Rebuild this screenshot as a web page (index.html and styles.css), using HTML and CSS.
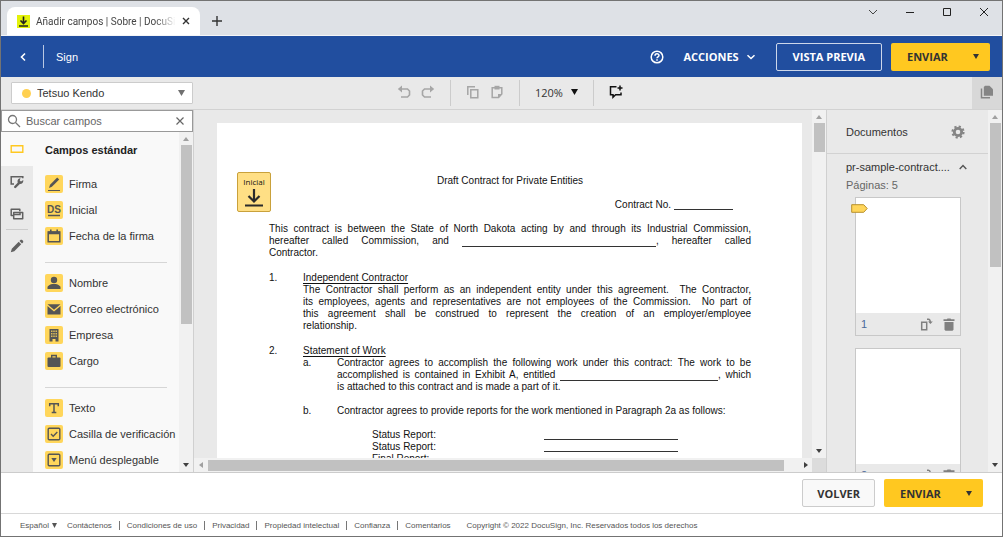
FILE: index.html
```html
<!DOCTYPE html>
<html lang="es">
<head>
<meta charset="utf-8">
<title>Añadir campos | Sobre | DocuSign</title>
<link rel="stylesheet" href="styles.css">
</head>
<body>
<div class="window">
  <header class="tabstrip">
    <div class="tab">
      <svg class="favicon" width="13" height="13" viewBox="0 0 13 13"><path fill="#e3f20a" d="M0 0h13v13H0z"/><path d="M6.5 1.5v7M3.500 5.500l3 3 3-3M2 11h9" fill="none" stroke="#222" stroke-width="1.6"/></svg>
      <span class="tab-title">Añadir campos | Sobre | DocuSig</span>
      <button class="plain" aria-label="Cerrar pestaña"><svg width="8" height="8" viewBox="0 0 8 8"><path d="M1 1l6 6M7 1L1 7" stroke="#333" stroke-width="1.4"/></svg></button>
    </div>
    <button class="plain new-tab" aria-label="Nueva pestaña"><svg width="10" height="10" viewBox="0 0 10 10"><path d="M5 0v10M0 5h10" stroke="#333" stroke-width="1.4"/></svg></button>
    <div class="window-controls">
      <button class="plain" aria-label="Buscar pestañas"><svg width="10" height="10" viewBox="0 0 10 10"><path d="M1 3l4 4 4-4" fill="none" stroke="#444"/></svg></button>
      <button class="plain" aria-label="Minimizar"><svg width="10" height="10" viewBox="0 0 10 10"><path d="M1 5.500h8" stroke="#222"/></svg></button>
      <button class="plain" aria-label="Maximizar"><svg width="10" height="10" viewBox="0 0 10 10"><path d="M1.500 1.500h7v7h-7z" fill="none" stroke="#222"/></svg></button>
      <button class="plain" aria-label="Cerrar"><svg width="10" height="10" viewBox="0 0 10 10"><path d="M1 1l8 8M9 1L1 9" stroke="#222"/></svg></button>
    </div>
  </header>

  <div class="appbar">
    <button class="plain back" aria-label="Atrás"><svg width="8" height="10" viewBox="0 0 8 10"><path d="M6 1.500L2.500 5 6 8.500" fill="none" stroke="#fff" stroke-width="1.600"/></svg></button>
    <span class="brand">Sign</span>
    <div class="appbar-actions">
      <button class="plain" aria-label="Ayuda"><svg width="14" height="14" viewBox="0 0 14 14" fill="none" stroke="#fff" stroke-width="1.500"><circle cx="7" cy="7" r="5.800"/><path d="M5 5.700c.1-2.500 4-2.400 4-.2 0 1.400-2 1.300-2 2.800M7 9.300v1.400"/></svg></button>
      <button class="plain caps actions">ACCIONES <svg width="10" height="8" viewBox="0 0 10 8"><path d="M1.500 2.200L5 5.500l3.500-3.300" fill="none" stroke="#fff" stroke-width="1.500"/></svg></button>
      <button class="btn caps outline">VISTA PREVIA</button>
      <button class="btn caps send">ENVIAR <svg width="6" height="5" viewBox="0 0 6 5"><path d="M0 0h6L3 5z" fill="#333"/></svg></button>
    </div>
  </div>

  <div class="toolbar">
    <div class="recipient">
      <select class="recipient-select" aria-label="Destinatario"><option>Tetsuo Kendo</option></select>
      <i class="dot"></i>
      <svg class="caret" width="7" height="6" viewBox="0 0 7 6"><path d="M0 0h7L3.500 6z" fill="#707070"/></svg>
    </div>
    <div class="tools">
      <div class="tool-group">
        <button class="plain" aria-label="Deshacer"><svg width="14" height="14" viewBox="0 0 14 14" fill="none" stroke="#a6a6a6" stroke-width="1.600"><path d="M4 4h6.500l2 2v4l-2 2H4"/><path d="M5 .5v7L.8 4z" fill="#a6a6a6" stroke="none"/></svg></button>
        <button class="plain" aria-label="Rehacer"><svg width="14" height="14" viewBox="0 0 14 14" fill="none" stroke="#a6a6a6" stroke-width="1.600"><path d="M10 4H3.500l-2 2v4l2 2H10"/><path d="M9 .5v7L13.200 4z" fill="#a6a6a6" stroke="none"/></svg></button>
      </div>
      <div class="tool-group">
        <button class="plain" aria-label="Copiar"><svg width="14" height="14" viewBox="0 0 14 14" fill="none" stroke="#a6a6a6" stroke-width="1.500"><path d="M1.800 10V1.800H9M4.800 4.800h7v8h-7z"/></svg></button>
        <button class="plain" aria-label="Pegar"><svg width="14" height="14" viewBox="0 0 14 14" fill="none" stroke="#a6a6a6" stroke-width="1.500"><path d="M2.200 2.800h9.600V9l-3.200 3.500H2.200z"/><path d="M4.500.8h5v3.700h-5z" fill="#a6a6a6" stroke="none"/><path d="M8 13V9h4z" fill="#a6a6a6" stroke="none"/></svg></button>
      </div>
      <div class="tool-group zoom">
        <button class="plain zoom-button">120% <svg width="7" height="6" viewBox="0 0 7 6"><path d="M0 0h7L3.500 6z" fill="#111"/></svg></button>
      </div>
      <div class="tool-group">
        <button class="plain" aria-label="Comentarios"><svg width="14" height="14" viewBox="0 0 14 14" fill="none" stroke="#111" stroke-width="1.500"><path d="M7.500 1.800H1.500v8H4v2.400l2.600-2.400H12V7.500"/><path d="M11 .5v5M8.500 3h5"/></svg></button>
      </div>
    </div>
    <button class="plain pages-toggle" aria-label="Páginas"><svg width="14" height="14" viewBox="0 0 14 14"><path d="M5 .8h4.500L13 4.200v6.600H3.800V2z" fill="#858585"/><path d="M1.500 3.500v9.200H10" fill="none" stroke="#858585" stroke-width="1.500"/></svg></button>
  </div>

  <main class="workspace">
    <aside class="fields">
      <div class="search">
        <svg width="14" height="14" viewBox="0 0 14 14" fill="none" stroke="#777" stroke-width="1.300"><circle cx="5.500" cy="5.500" r="4"/><path d="M8.500 8.500l4.500 4.500"/></svg>
        <input class="search-input" type="text" placeholder="Buscar campos" aria-label="Buscar campos">
        <button class="plain" aria-label="Borrar búsqueda"><svg width="8" height="8" viewBox="0 0 8 8"><path d="M.5.5l7 7M7.500.5l-7 7" stroke="#666" stroke-width="1.200"/></svg></button>
      </div>
      <div class="fields-body">
        <nav class="rail">
          <button class="plain rail-item selected" aria-label="Campos estándar"><svg width="14" height="14" viewBox="0 0 14 14"><path d="M1.200 3.700h11.600v6.600H1.200z" fill="none" stroke="#ffc820" stroke-width="1.400"/></svg></button>
          <button class="plain rail-item" aria-label="Campos personalizados"><svg width="14" height="14" viewBox="0 0 14 14"><path d="M4 9H1.200V1.700h11.600v1.500" fill="none" stroke="#606060" stroke-width="1.500"/><path d="M5.200 12L9 8.200" stroke="#606060" stroke-width="2.400" stroke-linecap="round"/><path d="M10.500 3.200L9.700 5.500l1.300.9 2.300-1.500c.3 3-1.700 4.500-4.100 4L7.500 7.200c-.2-2.500 1-4 3-4z" fill="#606060"/></svg></button>
          <button class="plain rail-item" aria-label="Campos combinados"><svg width="14" height="14" viewBox="0 0 14 14" fill="none" stroke="#606060" stroke-width="1.500"><path d="M3 8.500H1.200V2.200h8.600v2M3.700 5.500h9v6.300h-9z" stroke-linejoin="round"/><path d="M4 7.500h6V5"/></svg></button>
          <button class="plain rail-item divided" aria-label="Editar"><svg width="14" height="14" viewBox="0 0 14 14" fill="#606060"><path d="M.8 13.200l1-3.500L8.700 2.800l2.500 2.500-6.900 6.900zM9.500 2l1.200-1.200h1.200l1.300 1.300v1.200L12 4.500z"/></svg></button>
        </nav>
        <div class="field-list">
          <h2 class="field-title">Campos estándar</h2>
          <ul class="field-group">
            <li><button class="plain field"><svg class="chip" width="18" height="18" viewBox="0 0 18 18"><path d="M4 13l1-3.300 7.200-7.200 2 2-7.300 7.200z" fill="#555"/><path d="M3 15.500h12" stroke="#555"/></svg>Firma</button></li>
            <li><button class="plain field"><svg class="chip" width="18" height="18" viewBox="0 0 18 18"><text class="chip-text" x="9" y="12">DS</text><path d="M3 14.500h12" stroke="#555" stroke-width="1.300"/></svg>Inicial</button></li>
            <li><button class="plain field"><svg class="chip" width="18" height="18" viewBox="0 0 18 18"><path d="M3.200 5h11.600v9.800H3.200z" fill="none" stroke="#555" stroke-width="1.500"/><path d="M3 4.500h12v2.700H3zM5 2.500h1.600V5H5zM11.400 2.500H13V5h-1.600z" fill="#555"/></svg>Fecha de la firma</button></li>
          </ul>
          <ul class="field-group">
            <li><button class="plain field"><svg class="chip" width="18" height="18" viewBox="0 0 18 18" fill="#555"><circle cx="9" cy="6" r="3.200"/><path d="M2.500 15v-2.200C4 10.500 6.500 10 9 10s5 .5 6.500 2.800V15z"/></svg>Nombre</button></li>
            <li><button class="plain field"><svg class="chip" width="18" height="18" viewBox="0 0 18 18" fill="#555"><path d="M2.500 4.200h13L9 9.700zM2.500 6v8.500h13V6L9 11.500z"/></svg>Correo electrónico</button></li>
            <li><button class="plain field"><svg class="chip" width="18" height="18" viewBox="0 0 18 18"><path d="M4.500 3h9v12.500h-3V13h-3v2.500h-3z" fill="#555"/><path d="M6.800 4.500v7M9 4.500v7M11.200 4.500v7" stroke="#ffd65b" stroke-width="1.200" stroke-dasharray="1.500 1"/></svg>Empresa</button></li>
            <li><button class="plain field"><svg class="chip" width="18" height="18" viewBox="0 0 18 18"><rect x="2.500" y="5.500" width="13" height="9.500" rx="1" fill="#555"/><path d="M6.700 6V3.500h4.600V6" fill="none" stroke="#555" stroke-width="1.400"/></svg>Cargo</button></li>
          </ul>
          <ul class="field-group">
            <li><button class="plain field"><svg class="chip" width="18" height="18" viewBox="0 0 18 18"><path d="M4.700 7.200V4.700h8.600v2.500M9 4.700v9M6.700 13.600h4.600" fill="none" stroke="#555" stroke-width="1.500"/></svg>Texto</button></li>
            <li><button class="plain field"><svg class="chip" width="18" height="18" viewBox="0 0 18 18" fill="none" stroke="#555" stroke-width="1.400"><rect x="3.200" y="3.200" width="11.600" height="11.600" rx="1"/><path d="M6 9l2.200 2.200L12.300 7"/></svg>Casilla de verificación</button></li>
            <li><button class="plain field"><svg class="chip" width="18" height="18" viewBox="0 0 18 18"><rect x="3.200" y="3.200" width="11.600" height="11.600" rx="1" fill="none" stroke="#555" stroke-width="1.400"/><path d="M6.300 7h5.400L9 11z" fill="#555"/></svg>Menú desplegable</button></li>
          </ul>
        </div>
        <div class="scrollbar">
          <svg width="6" height="4" viewBox="0 0 6 4"><path d="M0 4h6L3 0z" fill="#a0a0a0"/></svg>
          <i class="thumb thumb-fields"></i>
          <svg class="scroll-end" width="6" height="4" viewBox="0 0 6 4"><path d="M0 0h6L3 4z" fill="#404040"/></svg>
        </div>
      </div>
    </aside>

    <section class="viewer">
      <div class="viewer-row">
        <div class="canvas">
          <article class="page">
            <button class="sign-tag"><span>Inicial</span><svg width="18" height="18" viewBox="0 0 18 18" fill="none" stroke="#2b2b2b" stroke-width="2.200"><path d="M9 0v12M3.500 7L9 12.500 14.500 7M0 16.500h18"/></svg></button>
            <h1 class="doc-title">Draft Contract for Private Entities</h1>
            <p class="contract-no">Contract No. <span class="blank blank-no"></span></p>
            <p class="para">
              <span class="line full">This contract is between the State of North Dakota acting by and through its Industrial Commission,</span>
              <span class="line full">hereafter called Commission, and <span class="blank blank-name"></span>, hereafter called</span>
              <span class="line">Contractor.</span>
            </p>
            <div class="clause">
              <span>1.</span>
              <div>
                <h3 class="clause-title">Independent Contractor</h3>
                <p class="para">
                  <span class="line full">The Contractor shall perform as an independent entity under this agreement.&nbsp; The Contractor,</span>
                  <span class="line full">its employees, agents and representatives are not employees of the Commission.&nbsp; No part of</span>
                  <span class="line full">this agreement shall be construed to represent the creation of an employer/employee</span>
                  <span class="line">relationship.</span>
                </p>
              </div>
            </div>
            <div class="clause">
              <span>2.</span>
              <div>
                <h3 class="clause-title">Statement of Work</h3>
                <div class="clause sub">
                  <span>a.</span>
                  <p class="para">
                    <span class="line full">Contractor agrees to accomplish the following work under this contract: The work to be</span>
                    <span class="line full">accomplished is contained in Exhibit A, entitled <span class="blank blank-exhibit"></span>, which</span>
                    <span class="line">is attached to this contract and is made a part of it.</span>
                  </p>
                </div>
                <div class="clause sub">
                  <span>b.</span>
                  <p class="para"><span class="line">Contractor agrees to provide reports for the work mentioned in Paragraph 2a as follows:</span></p>
                </div>
                <div class="reports">
                  <span>Status Report:</span><span class="blank"></span>
                  <span>Status Report:</span><span class="blank"></span>
                  <span>Final Report:</span><span class="blank"></span>
                </div>
              </div>
            </div>
          </article>
        </div>
        <div class="scrollbar">
          <svg width="6" height="4" viewBox="0 0 6 4"><path d="M0 4h6L3 0z" fill="#a0a0a0"/></svg>
          <i class="thumb thumb-doc"></i>
          <svg class="scroll-end" width="6" height="4" viewBox="0 0 6 4"><path d="M0 0h6L3 4z" fill="#404040"/></svg>
        </div>
      </div>
      <div class="hscroll">
        <svg width="4" height="6" viewBox="0 0 4 6"><path d="M4 0v6L0 3z" fill="#a0a0a0"/></svg>
        <i class="hthumb"></i>
        <svg class="hscroll-end" width="4" height="6" viewBox="0 0 4 6"><path d="M0 0v6l4-3z" fill="#404040"/></svg>
        <i class="corner"></i>
      </div>
    </section>

    <aside class="documents">
      <div class="documents-body">
        <div class="documents-head">
          <span>Documentos</span>
          <button class="plain" aria-label="Configuración"><svg width="14" height="14" viewBox="0 0 14 14" fill="none" stroke="#858585"><circle cx="7" cy="7" r="3.700" stroke-width="2.800"/><circle cx="7" cy="7" r="5.600" stroke-width="2" stroke-dasharray="2.200 2.198"/></svg></button>
        </div>
        <div class="file">
          <button class="plain file-name"><span>pr-sample-contract....</span><svg width="8" height="6" viewBox="0 0 8 6"><path d="M.7 5L4 1.500 7.300 5" fill="none" stroke="#555" stroke-width="1.400"/></svg></button>
          <span class="page-count">Páginas: 5</span>
        </div>
        <figure class="thumbnail">
          <svg class="marker" width="17" height="9" viewBox="0 0 17 9"><path d="M.7.700h12L16.200 4.500l-3.500 3.800H.7z" fill="#ffd65b" stroke="#b8902c"/></svg>
          <div class="sheet"></div>
          <figcaption class="thumb-bar"><span>1</span>
            <button class="plain" aria-label="Girar"><svg width="13" height="13" viewBox="0 0 13 13" fill="none" stroke="#808080" stroke-width="1.500"><path d="M1.700 4.200h5v7.600h-5zM7 1.200h1.500c1 0 1.700.6 1.700 2.800"/><path d="M8 3.500h4.800L10.400 6z" fill="#808080" stroke="none"/></svg></button>
            <button class="plain" aria-label="Eliminar"><svg width="12" height="13" viewBox="0 0 12 13" fill="#808080"><path d="M.5 1.300h3.300l.7-.8h3l.7.8h3.300V3H.5zM1.500 4h9v7.800l-1 .9h-7l-1-.9z"/></svg></button>
          </figcaption>
        </figure>
        <figure class="thumbnail">
          <div class="sheet"></div>
          <figcaption class="thumb-bar"><span>2</span>
            <button class="plain" aria-label="Girar"><svg width="13" height="13" viewBox="0 0 13 13" fill="none" stroke="#808080" stroke-width="1.500"><path d="M1.700 4.200h5v7.600h-5zM7 1.200h1.500c1 0 1.700.6 1.700 2.800"/></svg></button>
            <button class="plain" aria-label="Eliminar"><svg width="12" height="13" viewBox="0 0 12 13" fill="#808080"><path d="M.5 1.300h3.300l.7-.8h3l.7.8h3.300V3H.5zM1.500 4h9v7.800l-1 .9h-7l-1-.9z"/></svg></button>
          </figcaption>
        </figure>
      </div>
      <div class="scrollbar">
        <svg width="6" height="4" viewBox="0 0 6 4"><path d="M0 4h6L3 0z" fill="#a0a0a0"/></svg>
        <i class="thumb thumb-pages"></i>
        <svg class="scroll-end" width="6" height="4" viewBox="0 0 6 4"><path d="M0 0h6L3 4z" fill="#404040"/></svg>
      </div>
    </aside>
  </main>

  <div class="bottom-actions">
    <button class="btn caps ghost">VOLVER</button>
    <button class="btn caps send">ENVIAR <svg width="6" height="5" viewBox="0 0 6 5"><path d="M0 0h6L3 5z" fill="#333"/></svg></button>
  </div>

  <footer class="footer">
    <button class="plain language">Español <svg width="5" height="5" viewBox="0 0 5 5"><path d="M0 0h5L2.500 5z" fill="#555"/></svg></button>
    <nav class="footer-links">
      <a href="#">Contáctenos</a><a href="#">Condiciones de uso</a><a href="#">Privacidad</a><a href="#">Propiedad intelectual</a><a href="#">Confianza</a><a href="#">Comentarios</a>
    </nav>
    <span>Copyright © 2022 DocuSign, Inc. Reservados todos los derechos</span>
  </footer>
</div>
</body>
</html>
```

FILE: styles.css
```css
* { box-sizing: border-box; }
body, h1, h2, h3, p, ul, figure { margin: 0; padding: 0; }
body { font: 11px "Liberation Sans", Arial, sans-serif; color: #333; }
svg { display: block; flex: none; }
ul { list-style: none; }
a { color: inherit; text-decoration: none; }
button, input, select { font: inherit; color: inherit; }
.plain { display: flex; align-items: center; border: 0; padding: 0; background: none; }

.window { display: flex; flex-direction: column; height: 100vh; border: 1px solid #737373; background: #fff; overflow: hidden; }

.tabstrip { display: flex; flex: none; align-items: center; height: 35px; padding-left: 6px; background: #dee1e6; border-bottom: 1px solid #f4f5f7; }
.tab { display: flex; align-items: center; align-self: flex-end; gap: 6px; width: 193px; height: 28px; padding: 0 10px; border-radius: 8px 8px 0 0; background: #fff; }
.tab-title { flex: 1; overflow: hidden; white-space: nowrap; font: 10px Roboto, sans-serif; color: #444; mask-image: linear-gradient(90deg, #000 85%, transparent); }
.new-tab { margin: 6px 0 0 12px; }
.window-controls { display: flex; align-self: flex-start; gap: 27px; margin-left: auto; padding: 6px 13px; }

.appbar { display: flex; flex: none; align-items: center; height: 41px; padding: 0 12px 0 18px; background: #214e9f; color: #fff; }
.back { padding-right: 16px; }
.brand { display: flex; align-items: center; height: 23px; padding-left: 12px; border-left: 1px solid #b9c8e3; }
.appbar-actions { display: flex; align-items: center; margin-left: auto; }
.caps { font: bold 11px "Open Sans", sans-serif; }
.actions { gap: 7px; margin: 0 20px 0 19px; }
.btn { display: flex; align-items: center; justify-content: center; height: 28px; padding: 0 14px; border: 1px solid transparent; border-radius: 2px; white-space: nowrap; }
.outline { border-color: #cdd7ea; background: transparent; padding: 0 16px; margin-right: 9px; }
.send { justify-content: space-between; width: 99px; padding: 0 10px 0 15px; background: #ffc820; color: #333; }
.ghost { border-color: #ccc; background: #f9f9f9; }

.toolbar { display: flex; flex: none; align-items: stretch; height: 33px; background: #e9e9e9; border-bottom: 1px solid #d2d2d2; }
.recipient { position: relative; width: 192px; padding: 5px 0 0 10px; }
.recipient-select { width: 100%; height: 22px; padding: 0 25px; border: 1px solid #ccc; border-radius: 1px; background: #fff; appearance: none; }
.dot { position: absolute; left: 21px; top: 12px; width: 9px; height: 9px; border-radius: 50%; background: #ffd050; }
.caret { position: absolute; right: 8px; top: 13px; }
.tools { display: flex; align-items: center; padding-left: 189px; }
.tool-group { display: flex; align-items: center; gap: 10px; height: 26px; padding: 0 15px 2px; }
.tool-group + .tool-group { border-left: 1px solid #ccc; }
.zoom-button { gap: 8px; font: 11px "Open Sans", sans-serif; }
.pages-toggle { justify-content: center; width: 30px; margin-left: auto; padding-bottom: 3px; background: #d8d8d8; }

.workspace { display: flex; flex: 1; min-height: 0; border-bottom: 1px solid #ccc; }
.scrollbar { display: flex; flex: none; flex-direction: column; align-items: center; width: 14px; padding: 5px 0; background: #f1f1f1; }
.thumb { width: 11px; margin-top: 4px; background: #c1c1c1; }
.thumb-fields { height: 179px; }
.thumb-doc { height: 29px; }
.thumb-pages { height: 144px; }
.scroll-end { margin-top: auto; }

.fields { display: flex; flex: none; flex-direction: column; width: 193px; border-right: 1px solid #d0d0d0; }
.search { display: flex; flex: none; align-items: center; height: 22px; padding: 0 8px 0 5px; border: 1px solid #999; background: #fff; }
.search-input { flex: 1; min-width: 0; padding: 0 5px; border: 0; outline: 0; background: none; }
.search-input::placeholder { color: #666; }
.fields-body { display: flex; flex: 1; min-height: 0; background: #f9f9f9; }
.rail { display: flex; flex: none; flex-direction: column; width: 32px; background: #e9e9e9; }
.rail-item { justify-content: center; height: 33px; margin-bottom: -1px; }
.selected { background: #f9f9f9; height: 34px; }
.divided { position: relative; height: 34px; }
.divided::before { content: ""; position: absolute; top: 0; left: 5px; right: 5px; border-top: 1px solid #ccc; }
.field-list { flex: 1; min-width: 0; overflow: hidden; padding: 11px 0 0 12px; }
.field-title { font-size: 11px; line-height: 14px; color: #222; margin-bottom: 18px; }
.field-group { display: flex; flex-direction: column; gap: 8px; margin-bottom: 17px; }
.field-group + .field-group::before { content: ""; height: 1px; margin: 0 12px 3px 0; background: #d6d6d6; }
.field { gap: 6px; height: 18px; white-space: nowrap; }
.chip { border-radius: 2px; background: #ffd65b; }
.chip-text { font: bold 10px "Liberation Sans", sans-serif; fill: #555; text-anchor: middle; }

.viewer { display: flex; flex: 1; flex-direction: column; min-width: 0; border-right: 1px solid #d0d0d0; }
.viewer-row { display: flex; flex: 1; min-height: 0; }
.canvas { flex: 1; min-width: 0; overflow: hidden; padding: 13px 10px 0 23px; background: #e9e9e9; }
.page { position: relative; min-height: 500px; padding: 52px 51px 0 52px; background: #fff; color: #111; font-size: 10px; line-height: 12px; }
.sign-tag { position: absolute; left: 20px; top: 49px; display: flex; flex-direction: column; align-items: center; gap: 2px; width: 34px; height: 40px; padding: 4px 0 0; border: 1px solid #c9a13b; border-radius: 2px; background: #ffdf85; font: 8px "Open Sans", sans-serif; line-height: 10px; }
.doc-title { font-size: 10px; font-weight: normal; text-align: center; }
.contract-no { display: flex; justify-content: flex-end; gap: 3px; margin: 12px 18px 12px 0; }
.blank { display: inline-block; height: 11px; border-bottom: 1px solid #333; vertical-align: bottom; }
.blank-no { width: 59px; }
.blank-name { width: 194px; }
.blank-exhibit { width: 158px; }
.line { display: block; white-space: nowrap; }
.full { text-align: justify; text-align-last: justify; }
.clause { display: grid; grid-template-columns: 34px minmax(0, 1fr); margin-top: 13px; }
.clause-title { font-size: 10px; font-weight: normal; text-decoration: underline; text-underline-offset: 2px; }
.sub { margin-top: 12px; }
.clause-title + .sub { margin-top: 0; }
.reports { display: grid; grid-template-columns: 172px 134px; margin: 12px 0 0 69px; }

.hscroll { display: flex; flex: none; align-items: center; height: 14px; padding-left: 5px; background: #f1f1f1; }
.hthumb { flex: 1; height: 11px; margin: 0 20px 0 5px; background: #c1c1c1; }
.hscroll-end { margin-right: 4px; }
.corner { width: 14px; height: 14px; background: #dcdcdc; }

.documents { display: flex; flex: none; width: 175px; background: #e9e9e9; }
.documents-body { flex: 1; min-width: 0; overflow: hidden; }
.documents-head { display: flex; align-items: center; justify-content: space-between; height: 44px; padding: 0 23px 0 19px; border-bottom: 1px solid #d2d2d2; }
.file { padding: 6px 21px 5px 19px; line-height: 14px; }
.file-name { justify-content: space-between; width: 100%; margin-bottom: 4px; white-space: nowrap; }
.page-count { color: #666; }
.thumbnail { position: relative; margin: 0 27px 12px 28px; border: 1px solid #c8c8c8; }
.sheet { height: 115px; background: #fff; }
.thumb-bar { display: flex; align-items: center; gap: 10px; height: 22px; padding: 0 5px; color: #4a6a9a; }
.thumb-bar span { flex: 1; }
.marker { position: absolute; left: -5px; top: 6px; }

.bottom-actions { display: flex; flex: none; align-items: center; justify-content: flex-end; gap: 9px; height: 41px; padding-right: 19px; border-bottom: 1px solid #d8d8d8; }
.footer { display: flex; flex: none; align-items: center; height: 22px; padding-left: 19px; font: 8px "Liberation Sans", Arial, sans-serif; color: #555; white-space: nowrap; }
.language { gap: 3px; margin-right: 10px; }
.footer-links { display: flex; margin-right: 16px; }
.footer-links a + a { margin-left: 7px; padding-left: 7px; border-left: 1px solid #777; }
```
